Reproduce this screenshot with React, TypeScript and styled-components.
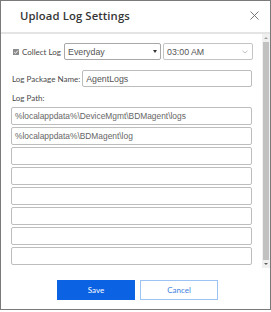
import React from "react";
import styled, { createGlobalStyle } from "styled-components";

const Global = createGlobalStyle`
  html, body { margin: 0; padding: 0; background: #ffffff; }
  * { box-sizing: border-box; }
`;

const Window = styled.div`
  width: 271px;
  height: 310px;
  border: 1px solid #7a7a7a;
  background: #fff;
  display: flex;
  flex-direction: column;
`;

const Header = styled.div`
  height: 33px;
  flex: none;
  border-bottom: 2px solid #e4e4e4;
  display: flex;
  align-items: center;
  justify-content: space-between;
  padding: 0 11px 2px 19px;
`;

const Title = styled.div`
  font-family: "Open Sans", sans-serif;
  font-weight: 600;
  font-size: 11.3px;
  color: #363636;
  letter-spacing: 0.1px;
`;

const Close = styled.svg`
  width: 9px;
  height: 9px;
  display: block;
`;

const Body = styled.div`
  height: 234px;
  flex: none;
  display: flex;
`;

const Content = styled.div`
  flex: 1;
  padding: 9px 0 0 10px;
  display: flex;
  flex-direction: column;
`;

const Row = styled.div<{ $mt?: number; $pl?: number }>`
  display: flex;
  align-items: center;
  margin-top: ${(p) => p.$mt ?? 0}px;
  padding-left: ${(p) => p.$pl ?? 0}px;
  height: 17px;
`;

const Check = styled.svg`
  width: 6px;
  height: 6px;
  margin-right: 3px;
  display: block;
  flex: none;
`;

const Label = styled.span<{ $mr?: number }>`
  font-family: "Lato", sans-serif;
  font-size: 8px;
  color: #4a4a4a;
  margin-right: ${(p) => p.$mr ?? 0}px;
  white-space: nowrap;
`;

const Field = styled.div<{ $w: number; $border?: string; $ml?: number }>`
  width: ${(p) => p.$w}px;
  height: 17px;
  flex: none;
  margin-left: ${(p) => p.$ml ?? 0}px;
  border: 1px solid ${(p) => p.$border ?? "#bcbcbc"};
  border-radius: 2px;
  padding: 0 3px;
  display: flex;
  align-items: center;
  justify-content: space-between;
  font-family: "Liberation Sans", Arial, sans-serif;
  font-size: 8.8px;
  color: #555;
  background: #fff;
`;

const PathLabel = styled.div`
  font-family: "Lato", sans-serif;
  font-size: 8px;
  color: #4a4a4a;
  line-height: 14px;
  margin: 4px 0 2px 1px;
`;

const PathList = styled.div`
  display: flex;
  flex-direction: column;
  gap: 2px;
`;

const PathInput = styled.div`
  width: 241px;
  height: 18px;
  border: 1px solid #bdbdbd;
  border-radius: 2px;
  padding: 0 3px;
  display: flex;
  align-items: center;
  font-family: "Liberation Sans", Arial, sans-serif;
  font-size: 8.4px;
  color: #666;
`;

const ScrollBar = styled.div`
  width: 8px;
  flex: none;
  background: #f0f0f0;
  display: flex;
  flex-direction: column;
  align-items: center;
`;

const Arrow = styled.div<{ $down?: boolean }>`
  height: 8px;
  width: 8px;
  flex: none;
  display: flex;
  align-items: center;
  justify-content: center;
  &::after {
    content: "";
    border-left: 2px solid transparent;
    border-right: 2px solid transparent;
    ${(p) =>
      p.$down
        ? "border-top: 2px solid #606060;"
        : "border-bottom: 2px solid #a0a0a0;"}
  }
`;

const Thumb = styled.div`
  flex: 1;
  width: 6px;
  background: #c1c1c1;
`;

const Footer = styled.div`
  flex: 1;
  display: flex;
  gap: 5px;
  padding: 12px 0 0 56px;
`;

const Button = styled.div<{ $primary?: boolean }>`
  width: 78px;
  height: 20px;
  display: flex;
  align-items: center;
  justify-content: center;
  font-family: "Lato", sans-serif;
  font-size: 8px;
  background: ${(p) => (p.$primary ? "#0b62e3" : "#fff")};
  color: ${(p) => (p.$primary ? "#fff" : "#3d7fe0")};
  border: 1px solid ${(p) => (p.$primary ? "#0b62e3" : "#9cc3f3")};
`;

const paths = [
  "%localappdata%\\DeviceMgmt\\BDMagent\\logs",
  "%localappdata%\\BDMagent\\log",
  "",
  "",
  "",
  "",
  "",
  "",
];

export default function App() {
  return (
    <>
      <Global />
      <Window>
        <Header>
          <Title>Upload Log Settings</Title>
          <Close viewBox="0 0 9 9">
            <path d="M0.5 0.5 L8.5 8.5 M8.5 0.5 L0.5 8.5" stroke="#6a6a6a" strokeWidth="0.9" fill="none" />
          </Close>
        </Header>
        <Body>
          <Content>
            <Row $pl={2}>
              <Check viewBox="0 0 6 6">
                <rect x="0" y="0" width="6" height="6" fill="#8c8c8c" />
                <path d="M1.2 3.1 L2.5 4.4 L4.9 1.5" stroke="#fff" strokeWidth="0.9" fill="none" />
              </Check>
              <Label $mr={3}>Collect Log</Label>
              <Field $w={97} $border="#a8a8a8">
                <span>Everyday</span>
                <svg width="4" height="3" viewBox="0 0 4 3">
                  <path d="M0 0 L4 0 L2 3 Z" fill="#333" />
                </svg>
              </Field>
              <Field $w={90} $border="#c4c4c4" $ml={2}>
                <span>03:00 AM</span>
                <svg width="6" height="4" viewBox="0 0 6 4" style={{ marginRight: 1 }}>
                  <path d="M0.5 0.8 L3 3 L5.5 0.8" stroke="#b0b0b0" strokeWidth="0.8" fill="none" />
                </svg>
              </Field>
            </Row>
            <Row $mt={10} $pl={1}>
              <Label $mr={2}>Log Package Name:</Label>
              <Field $w={170}>AgentLogs</Field>
            </Row>
            <PathLabel>Log Path:</PathLabel>
            <PathList>
              {paths.map((p, i) => (
                <PathInput key={i}>{p}</PathInput>
              ))}
            </PathList>
          </Content>
          <ScrollBar>
            <Arrow />
            <Thumb />
            <Arrow $down />
          </ScrollBar>
        </Body>
        <Footer>
          <Button $primary>Save</Button>
          <Button>Cancel</Button>
        </Footer>
      </Window>
    </>
  );
}
